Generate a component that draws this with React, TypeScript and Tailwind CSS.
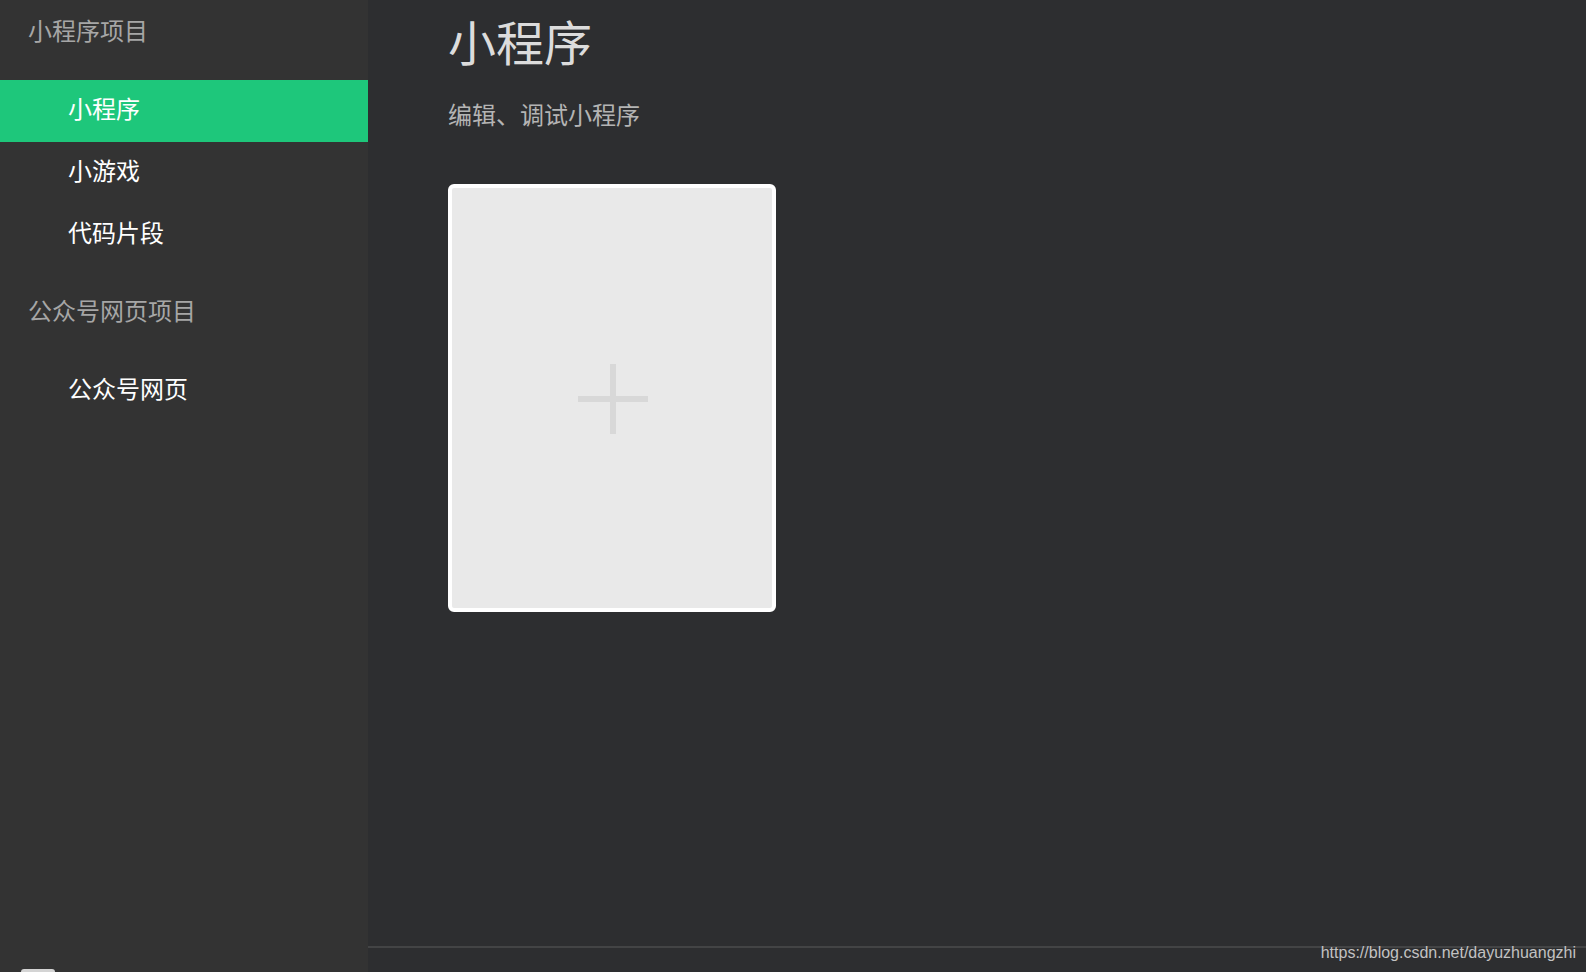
import React from "react";

const cjk = { fontFamily: '"Noto Sans CJK SC", "Noto Sans", sans-serif' };

function NavItem({ label, active }: { label: string; active?: boolean }) {
  return (
    <div
      className={
        "h-[62px] flex items-center pl-[68px] pb-[6px] text-[24px] leading-[24px] text-white " +
        (active ? "bg-[#1ec77b]" : "")
      }
    >
      {label}
    </div>
  );
}

export default function App() {
  return (
    <div className="flex h-[972px] w-full overflow-hidden" style={cjk}>
      <aside className="w-[368px] shrink-0 bg-[#333333] flex flex-col">
        <div className="h-[80px] pl-[28px] pt-[18px] text-[24px] leading-[24px] text-[#a6a6a6]">
          小程序项目
        </div>
        <NavItem label="小程序" active />
        <NavItem label="小游戏" />
        <NavItem label="代码片段" />
        <div className="h-[94px] pl-[28px] pt-[32px] text-[24px] leading-[24px] text-[#a6a6a6]">
          公众号网页项目
        </div>
        <NavItem label="公众号网页" />
        <div className="flex-1" />
        <div className="ml-[21px] w-[34px] h-[3px] rounded-t-[3px] bg-[#d4d4d4]" />
      </aside>
      <main className="relative flex-1 bg-[#2d2e30] flex flex-col">
        <div className="flex-1 pl-[80px]">
          <h1 className="mt-[16px] text-[48px] leading-[48px] text-[#dcdcdc] font-normal">
            小程序
          </h1>
          <p className="mt-[38px] text-[24px] leading-[24px] text-[#b4b4b4]">
            编辑、调试小程序
          </p>
          <div className="mt-[58px] w-[328px] h-[428px] rounded-[6px] border-4 border-white bg-[#e9e9e9] flex items-center justify-center">
            <svg width="70" height="70" viewBox="0 0 70 70" className="ml-[2px] mt-[2px]">
              <rect x="0" y="32" width="70" height="6" fill="#d8d8d8" />
              <rect x="32" y="0" width="6" height="70" fill="#d8d8d8" />
            </svg>
          </div>
        </div>
        <div className="h-[26px] border-t-2 border-[#434445]" />
        <div
          className="absolute right-[10px] bottom-[11px] text-[16px] leading-[16px] text-[#c2c2c2]"
          style={{ fontFamily: '"Liberation Sans", Arial, sans-serif' }}
        >
          https://blog.csdn.net/dayuzhuangzhi
        </div>
      </main>
    </div>
  );
}
